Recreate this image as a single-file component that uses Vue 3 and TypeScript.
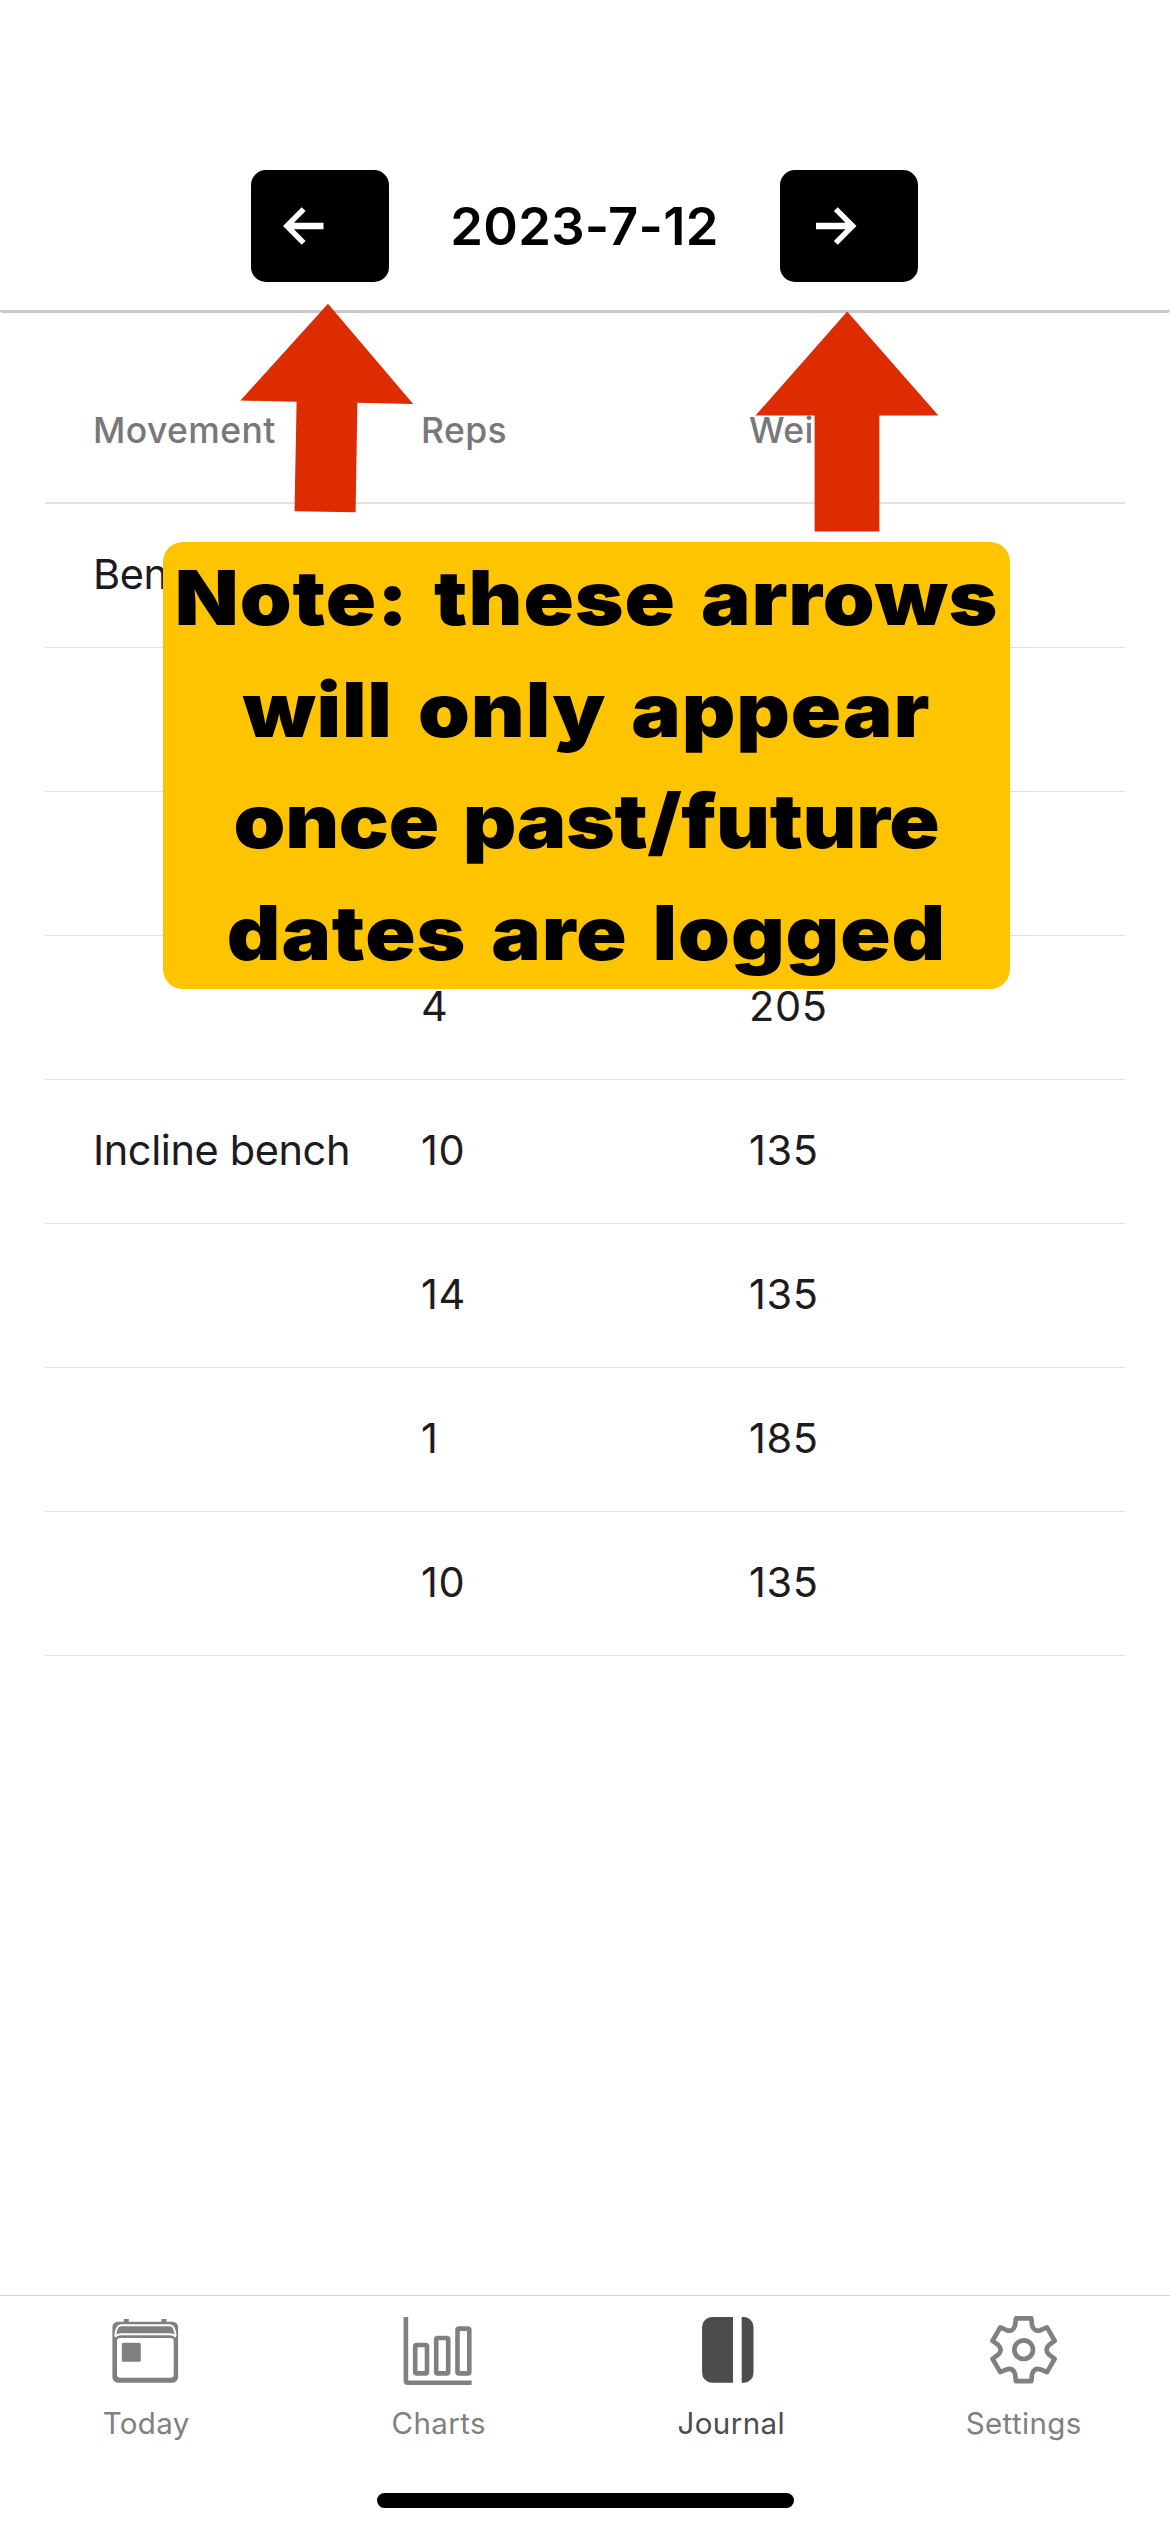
<script setup lang="ts">
interface SetRow {
  movement: string
  reps: number
  weight: number
}

interface NoteLine {
  text: string
  tight?: boolean
}

const date = '2023-7-12'

const rows: SetRow[] = [
  { movement: 'Bench', reps: 10, weight: 135 },
  { movement: '', reps: 8, weight: 185 },
  { movement: '', reps: 6, weight: 195 },
  { movement: '', reps: 4, weight: 205 },
  { movement: 'Incline bench', reps: 10, weight: 135 },
  { movement: '', reps: 14, weight: 135 },
  { movement: '', reps: 1, weight: 185 },
  { movement: '', reps: 10, weight: 135 },
]

const noteLines: NoteLine[] = [
  { text: 'Note: these arrows' },
  { text: 'will only appear' },
  { text: 'once past/future', tight: true },
  { text: 'dates are logged' },
]

// Six-toothed gear outline, built by rotating one tooth and the valley after it.
function gearPath(cx: number, cy: number): string {
  const at = (x: number, y: number, turn: number): string => {
    const a = (turn * Math.PI) / 3
    const px = cx + x * Math.cos(a) - y * Math.sin(a)
    const py = cy + x * Math.sin(a) + y * Math.cos(a)
    return `${px.toFixed(2)} ${py.toFixed(2)}`
  }
  let d = ''
  for (let i = 0; i < 6; i++) {
    d += `${i ? 'L' : 'M'}${at(-7.7, -31.4, i)}L${at(7.7, -31.4, i)}L${at(8.5, -24.5, i)}`
    d += `C${at(9.5, -20, i)} ${at(-9.5, -20, i + 1)} ${at(-8.5, -24.5, i + 1)}`
  }
  return d + 'Z'
}

const gear = gearPath(35.6, 35.8)
</script>

<template>
  <div class="screen">
    <header class="header">
      <button class="nav" aria-label="Previous day">
        <svg width="41" height="38" viewBox="0 0 41 38">
          <path d="M0 19 18.7 0.3 22.6 4 11 15.8H40.5V22.3H11L22.6 34 18.7 37.7Z" fill="#fff" />
        </svg>
      </button>
      <h1 class="date">{{ date }}</h1>
      <button class="nav" aria-label="Next day">
        <svg width="41" height="38" viewBox="0 0 41 38">
          <path d="M40.5 19 21.8 0.3 17.9 4 29.5 15.8H0V22.3H29.5L17.9 34 21.8 37.7Z" fill="#fff" />
        </svg>
      </button>
    </header>

    <main class="table">
      <div class="row head">
        <span>Movement</span><span>Reps</span><span>Weight</span>
      </div>
      <div v-for="(r, i) in rows" :key="i" class="row">
        <span class="name">{{ r.movement }}</span><span>{{ r.reps }}</span><span>{{ r.weight }}</span>
      </div>
    </main>

    <svg class="pointer pointer-left" width="174" height="210" viewBox="240 303 174 210">
      <path d="M328 303.7 413.2 404 357.4 402.7 355.6 512.3 294.5 511.2 296.6 401.7 240.4 400.6Z" fill="#dd2c00" />
    </svg>
    <svg class="pointer pointer-right" width="184" height="222" viewBox="755 311 184 222">
      <path d="M847.2 311.5 938.4 415.5H879.4V531.6H814.6V415.5H755.5Z" fill="#dd2c00" />
    </svg>
    <div class="note">
      <div v-for="line in noteLines" :key="line.text" class="line" :class="{ tight: line.tight }">{{ line.text }}</div>
    </div>

    <footer class="footer">
      <nav class="tabs">
        <div class="tab">
          <svg width="72" height="72" viewBox="0 0 72 72">
            <path d="M13.8 8V5h5v3ZM51.4 8V5h5v3Z" fill="#808080" />
            <rect x="2.4" y="7.7" width="65.7" height="61" rx="5.5" fill="#808080" />
            <rect x="7" y="24" width="56.7" height="39.7" rx="3" fill="#fff" />
            <path d="M5.3 22Q6 11.3 11 11.3H59.8Q64.8 11.3 65.6 22" fill="none" stroke="#fff" stroke-width="1.9" />
            <path d="M5.3 23Q6.8 20.3 11.5 20.3H59.3Q64 20.3 65.6 23" fill="none" stroke="#fff" stroke-width="1.9" />
            <rect x="11.8" y="28.8" width="19" height="19" rx="1.6" fill="#808080" />
          </svg>
          <span>Today</span>
        </div>
        <div class="tab">
          <svg width="72" height="72" viewBox="0 0 72 72" fill="none" stroke="#808080" stroke-width="4.6">
            <path d="M2.9 3V66.7Q2.9 68.7 4.9 68.7H68.6" />
            <rect x="12.2" y="31" width="11.8" height="28.4" rx="1.4" />
            <rect x="33.2" y="24" width="12" height="35.4" rx="1.4" />
            <rect x="54.5" y="14.6" width="11.8" height="44.8" rx="1.4" />
          </svg>
          <span>Charts</span>
        </div>
        <div class="tab active">
          <svg width="72" height="72" viewBox="0 0 72 72" fill="#4b4c4e">
            <path d="M38 3V68.7H17A9.9 9.9 0 0 1 7.1 58.8V12.9A9.9 9.9 0 0 1 17 3Z" />
            <path d="M46.7 3H49A9.5 9.9 0 0 1 58.5 12.9V58.8A9.5 9.9 0 0 1 49 68.7H46.7Z" />
          </svg>
          <span>Journal</span>
        </div>
        <div class="tab">
          <svg width="72" height="72" viewBox="0 0 72 72" fill="none" stroke="#808080" stroke-width="4.7" stroke-linejoin="round">
            <path :d="gear" />
            <circle cx="35.7" cy="35.7" r="9.3" />
          </svg>
          <span>Settings</span>
        </div>
      </nav>
      <div class="home-indicator"></div>
    </footer>
  </div>
</template>

<style>
body {
  margin: 0;
  background: #fff;
}
</style>

<style scoped>
.screen {
  position: relative;
  box-sizing: border-box;
  width: 1170px;
  height: 2532px;
  display: flex;
  flex-direction: column;
  overflow: hidden;
  background: #fff;
  color: #1c1b1f;
  font-family: Inter, 'Liberation Sans', sans-serif;
}

.header {
  box-sizing: border-box;
  height: 313px;
  padding: 170px 0 0 251px;
  display: grid;
  grid-template-columns: 138px 391px 138px;
  grid-template-rows: 112px;
  align-items: center;
  border-bottom: 3px solid #c8caca;
  border-radius: 3px;
}

.nav {
  height: 112px;
  padding: 0 0 0 32px;
  display: flex;
  align-items: center;
  border: 0;
  border-radius: 15px;
  background: #000;
}

.nav:last-child {
  padding-left: 36px;
}

.date {
  margin: 0;
  text-align: center;
  font-size: 52.5px;
  font-weight: 600;
  letter-spacing: 0.25px;
  color: #000;
}

.table {
  padding: 0 45px;
}

.row {
  box-sizing: border-box;
  height: 144px;
  padding: 0 48px 4px;
  display: grid;
  grid-template-columns: repeat(3, 1fr);
  align-items: center;
  border-bottom: 1px solid #e0dfe8;
  font-size: 41.5px;
  line-height: 60px;
  letter-spacing: 0.6px;
  white-space: nowrap;
}

.name {
  letter-spacing: -0.4px;
}

.row.head {
  height: 191px;
  padding-bottom: 47px;
  align-items: end;
  border-bottom: 2px solid #e3deec;
  font-size: 35.5px;
  font-weight: 500;
  line-height: 48px;
  letter-spacing: 0.4px;
  color: #78777a;
}

.pointer {
  position: absolute;
}

.pointer-left {
  left: 240px;
  top: 303px;
}

.pointer-right {
  left: 755px;
  top: 311px;
}

.note {
  position: absolute;
  left: 163px;
  top: 542px;
  box-sizing: border-box;
  width: 847px;
  height: 446.5px;
  border-radius: 20px;
  background: #ffc400;
  color: #000;
  text-align: center;
  font-size: 75px;
  font-weight: 900;
  line-height: 111.7px;
  letter-spacing: 0.8px;
  word-spacing: 7px;
  white-space: nowrap;
}

.line {
  transform: scaleX(1.108);
}

.line.tight {
  letter-spacing: -0.3px;
}

.footer {
  margin-top: auto;
  box-sizing: border-box;
  height: 237px;
  border-top: 1px solid #d2d2d3;
  display: flex;
  flex-direction: column;
  align-items: center;
}

.tabs {
  width: 100%;
  height: 197px;
  display: grid;
  grid-template-columns: repeat(4, 1fr);
}

.tab {
  padding-top: 18px;
  display: flex;
  flex-direction: column;
  align-items: center;
  gap: 19px;
  color: #808080;
  font-size: 29.5px;
  line-height: 36px;
  letter-spacing: 0.4px;
}

.tab.active {
  color: #4b4c4e;
}

.home-indicator {
  width: 417px;
  height: 15px;
  border-radius: 8px;
  background: #000;
}
</style>
